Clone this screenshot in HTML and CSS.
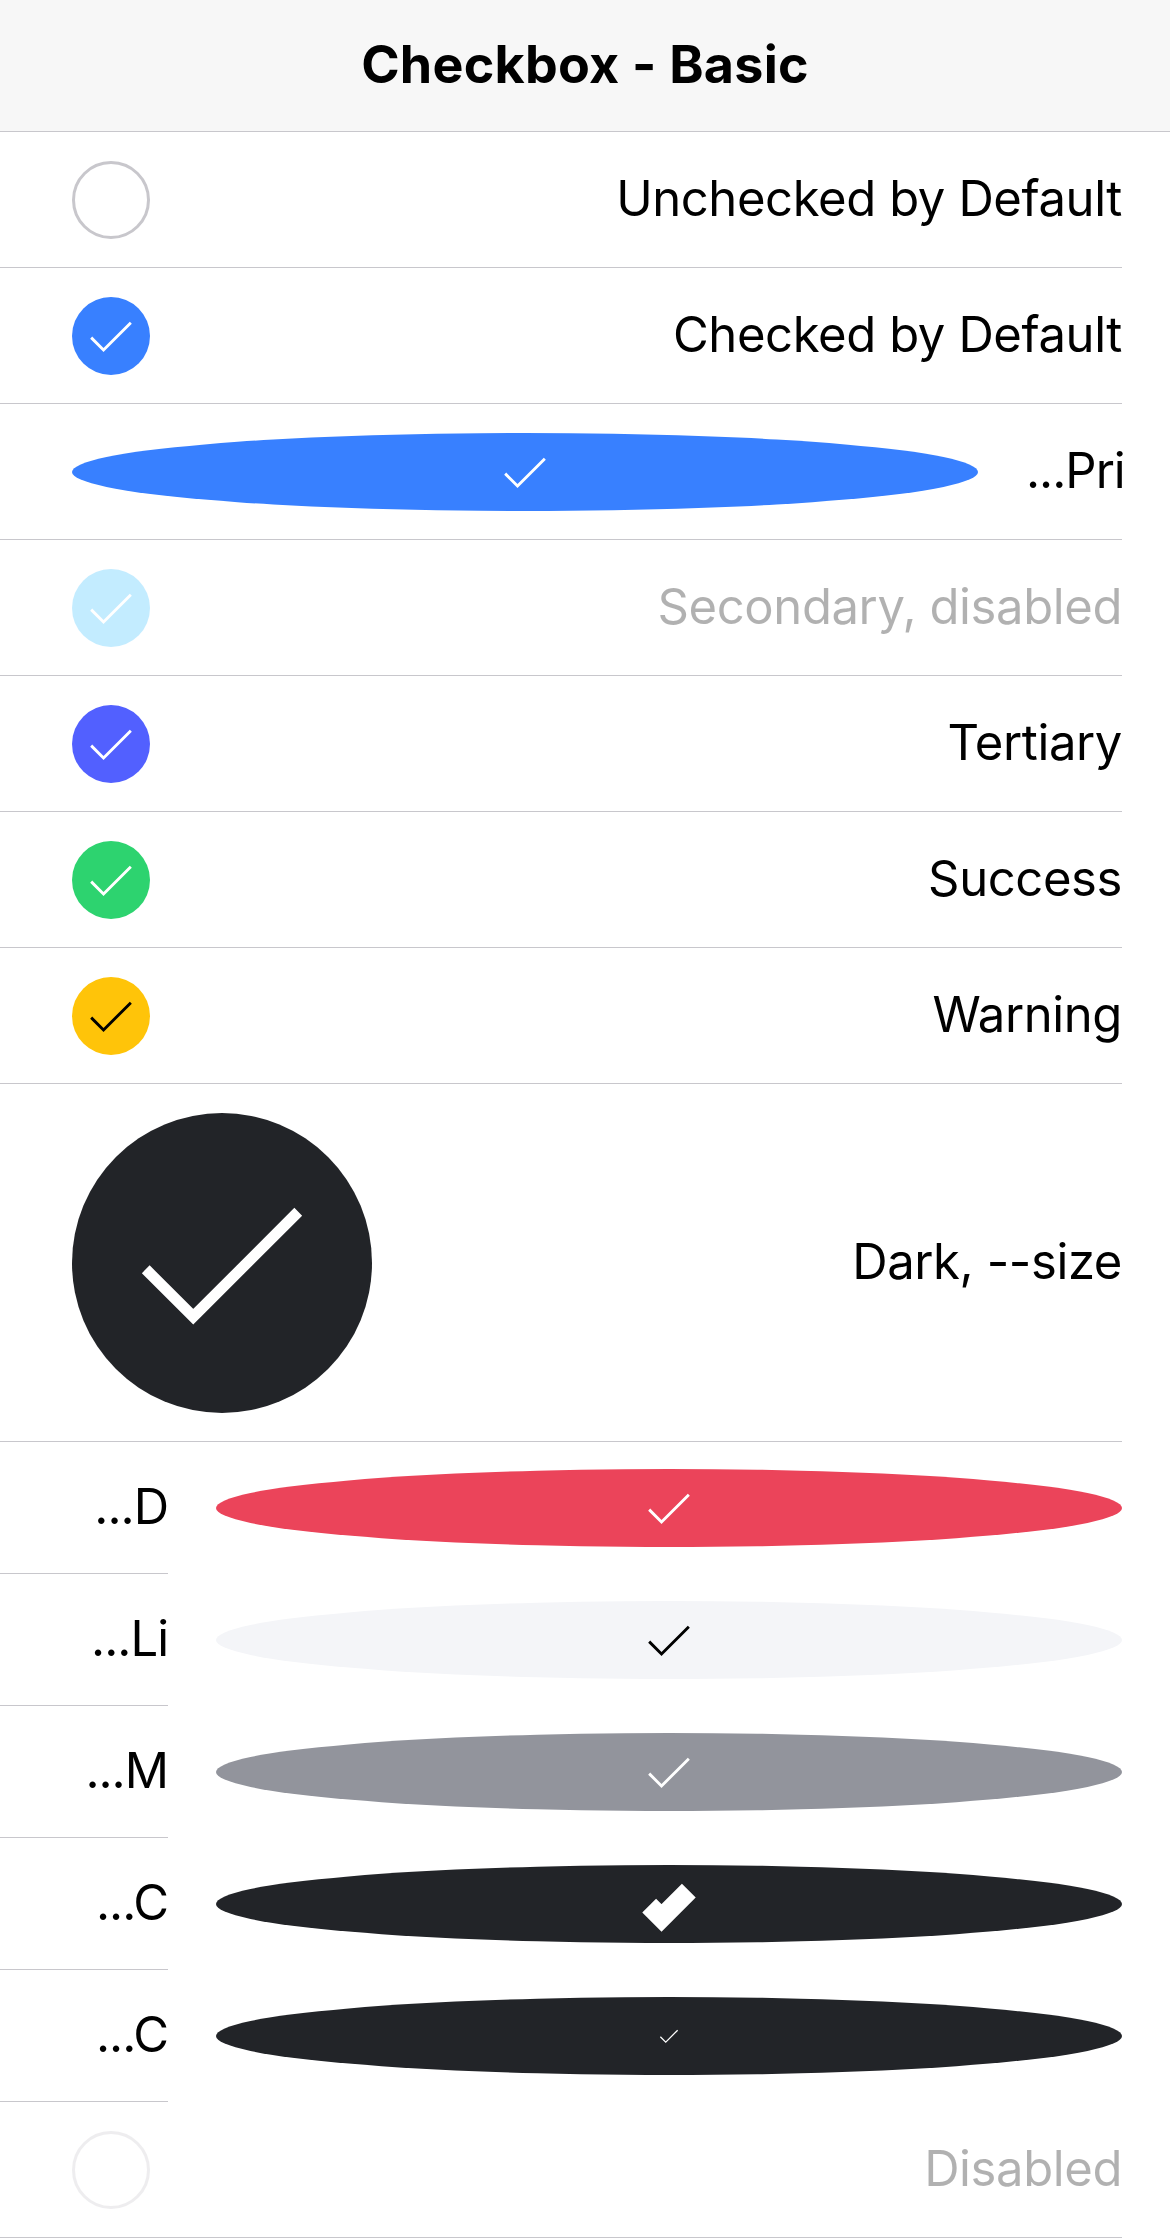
FILE: index.html
```html
<!DOCTYPE html>
<html lang="en">
<head>
<meta charset="utf-8">
<title>Checkbox - Basic</title>
<link rel="stylesheet" href="styles.css">
</head>
<body>
<header class="toolbar"><h1 class="title">Checkbox - Basic</h1></header>
<main class="list">
  <div class="item">
    <span class="cb cb-unchecked"></span>
    <span class="label">Unchecked by Default</span>
  </div>
  <div class="item">
    <span class="cb cb-primary"><svg viewBox="0 0 24 24"><path d="M5.9,12.5l3.8,3.8l8.4-8.4"/></svg></span>
    <span class="label">Checked by Default</span>
  </div>
  <div class="item">
    <span class="cb cb-wide cb-primary"><svg viewBox="0 0 24 24"><path d="M5.9,12.5l3.8,3.8l8.4-8.4"/></svg></span>
    <span class="label label-short label-after">...Pri</span>
  </div>
  <div class="item item-disabled">
    <span class="cb cb-secondary"><svg viewBox="0 0 24 24"><path d="M5.9,12.5l3.8,3.8l8.4-8.4"/></svg></span>
    <span class="label">Secondary, disabled</span>
  </div>
  <div class="item">
    <span class="cb cb-tertiary"><svg viewBox="0 0 24 24"><path d="M5.9,12.5l3.8,3.8l8.4-8.4"/></svg></span>
    <span class="label">Tertiary</span>
  </div>
  <div class="item">
    <span class="cb cb-success"><svg viewBox="0 0 24 24"><path d="M5.9,12.5l3.8,3.8l8.4-8.4"/></svg></span>
    <span class="label">Success</span>
  </div>
  <div class="item">
    <span class="cb cb-warning"><svg viewBox="0 0 24 24"><path d="M5.9,12.5l3.8,3.8l8.4-8.4"/></svg></span>
    <span class="label">Warning</span>
  </div>
  <div class="item">
    <span class="cb cb-dark cb-large"><svg viewBox="0 0 24 24"><path d="M5.9,12.5l3.8,3.8l8.4-8.4"/></svg></span>
    <span class="label">Dark, --size</span>
  </div>
  <div class="item item-start">
    <span class="start-cell"><span class="label label-short">...D</span></span>
    <span class="cb cb-wide cb-danger"><svg viewBox="0 0 24 24"><path d="M5.9,12.5l3.8,3.8l8.4-8.4"/></svg></span>
  </div>
  <div class="item item-start">
    <span class="start-cell"><span class="label label-short">...Li</span></span>
    <span class="cb cb-wide cb-light"><svg viewBox="0 0 24 24"><path d="M5.9,12.5l3.8,3.8l8.4-8.4"/></svg></span>
  </div>
  <div class="item item-start">
    <span class="start-cell"><span class="label label-short">...M</span></span>
    <span class="cb cb-wide cb-medium"><svg viewBox="0 0 24 24"><path d="M5.9,12.5l3.8,3.8l8.4-8.4"/></svg></span>
  </div>
  <div class="item item-start">
    <span class="start-cell"><span class="label label-short">...C</span></span>
    <span class="cb cb-wide cb-dark cb-thick"><svg viewBox="0 0 24 24"><path d="M5.9,12.5l3.8,3.8l8.4-8.4"/></svg></span>
  </div>
  <div class="item item-start">
    <span class="start-cell"><span class="label label-short">...C</span></span>
    <span class="cb cb-wide cb-dark cb-tiny"><svg viewBox="0 0 24 24"><path d="M5.9,12.5l3.8,3.8l8.4-8.4"/></svg></span>
  </div>
  <div class="item item-disabled">
    <span class="cb cb-unchecked"></span>
    <span class="label">Disabled</span>
  </div>
</main>
</body>
</html>
```

FILE: styles.css
```css
* {
  box-sizing: border-box;
}

body {
  margin: 0;
  background: #ffffff;
  color: #000000;
  font-family: Inter, "Noto Sans", "Liberation Sans", sans-serif;
}

.toolbar {
  height: 132px;
  background: #f7f7f7;
  border-bottom: 1px solid #c8c7cc;
  display: flex;
  align-items: center;
  justify-content: center;
}

.title {
  margin: 0;
  font-size: 52px;
  font-weight: 700;
  letter-spacing: 0.25px;
  line-height: 1.2;
}

.item {
  display: flex;
  align-items: center;
  margin-right: 48px;
  padding: 28.5px 0 28.5px 72px;
  border-bottom: 1px solid #c8c7cc;
}

.label {
  flex: 1;
  min-width: 0;
  text-align: right;
  font-size: 49px;
  line-height: 1.2;
  white-space: nowrap;
  letter-spacing: -0.4px;
}

.label-short {
  flex: 0 0 96px;
  width: 96px;
  letter-spacing: -1px;
}

.label-after {
  margin-left: 48px;
}

.cb {
  flex: none;
  width: 78px;
  height: 78px;
  border-radius: 50%;
  display: flex;
  align-items: center;
  justify-content: center;
  color: #ffffff;
}

.cb svg {
  width: 78px;
  height: 78px;
  display: block;
}

.cb path {
  fill: none;
  stroke: currentColor;
  stroke-width: 0.88;
  stroke-linecap: butt;
  stroke-linejoin: miter;
}

.cb-unchecked {
  border: 3px solid #c8c7cc;
  background: #ffffff;
}

.cb-wide {
  width: 906px;
}

.cb-large {
  width: 300px;
  height: 300px;
}

.cb-large svg {
  width: 300px;
  height: 300px;
}

.cb-thick path {
  stroke-width: 6;
}

.cb-tiny svg {
  width: 34px;
  height: 34px;
}

.cb-primary { background: #3880ff; }
.cb-secondary { background: #3dc2ff; }
.cb-tertiary { background: #5260ff; }
.cb-success { background: #2dd36f; }
.cb-warning { background: #ffc409; color: #000000; }
.cb-danger { background: #eb445a; }
.cb-light { background: #f4f5f8; color: #000000; }
.cb-medium { background: #92949c; }
.cb-dark { background: #222428; }

.item-disabled .cb,
.item-disabled .label {
  opacity: 0.3;
}

.item-start {
  padding: 0;
  border-bottom: none;
}

.start-cell {
  align-self: stretch;
  flex: none;
  width: 168px;
  height: 132px;
  padding-left: 72px;
  border-bottom: 1px solid #c8c7cc;
  display: flex;
  align-items: center;
  justify-content: flex-end;
}

.item-start .cb-wide {
  margin-left: 48px;
}
```
